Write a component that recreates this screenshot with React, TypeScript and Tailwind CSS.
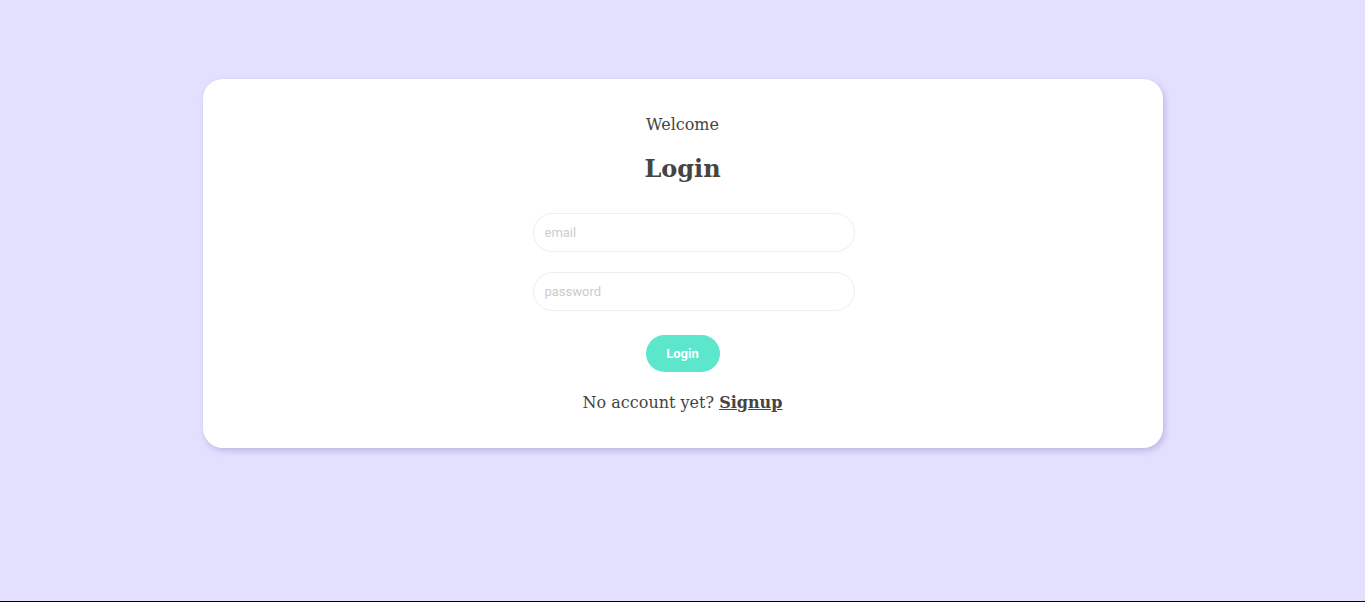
export default function App() {
  return (
    <div className="h-[602px] bg-[#e3e0ff] border-b border-black pt-[79px] font-['DejaVu_Serif',serif] text-[#444]">
      <div className="mx-auto w-[960px] h-[369px] bg-white rounded-[20px] shadow-[2px_3px_6px_rgba(120,110,180,0.35)] flex flex-col items-center pt-[34px]">
        <p className="text-[16px] leading-6">Welcome</p>
        <h1 className="mt-[16px] text-[24px] font-bold leading-8">Login</h1>
        <form className="mt-[28px] flex flex-col items-center" onSubmit={(e) => e.preventDefault()}>
          <input
            type="email"
            placeholder="email"
            className="ml-[22px] w-[322px] h-[39px] rounded-full border border-[#eee] px-[11px] font-['Roboto',sans-serif] text-[13px] text-[#444] placeholder:text-[#ccc] outline-none"
          />
          <input
            type="password"
            placeholder="password"
            className="mt-[20px] ml-[22px] w-[322px] h-[39px] rounded-full border border-[#eee] px-[11px] font-['Roboto',sans-serif] text-[13px] text-[#444] placeholder:text-[#ccc] outline-none"
          />
          <button
            type="submit"
            className="mt-[24px] w-[74px] h-[37px] rounded-full bg-[#5ce6cb] text-white font-['Roboto',sans-serif] font-bold text-[13px]"
          >
            Login
          </button>
        </form>
        <p className="mt-[19px] text-[16px] leading-6">
          No account yet?{' '}
          <a href="#" className="font-bold underline">
            Signup
          </a>
        </p>
      </div>
    </div>
  )
}
